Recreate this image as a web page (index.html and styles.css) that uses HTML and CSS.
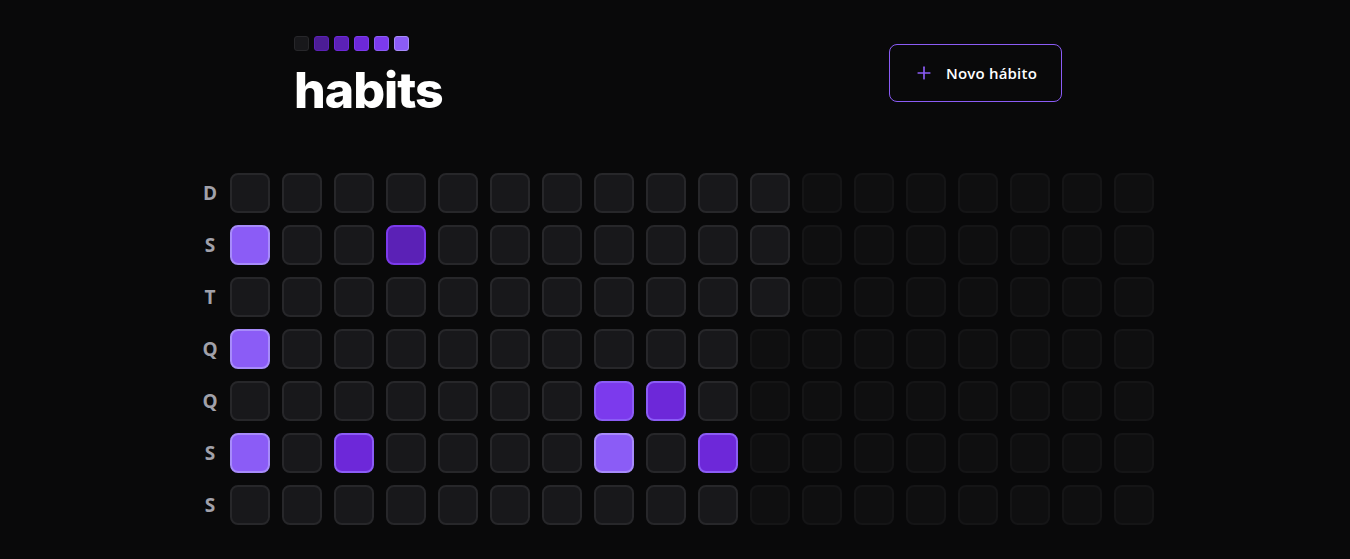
FILE: index.html
```html
<!DOCTYPE html>
<html lang="pt-BR">
<head>
<meta charset="utf-8">
<title>habits</title>
<link rel="stylesheet" href="styles.css">
</head>
<body>
<main class="page">
  <header class="header">
    <div class="logo">
      <div class="logo-squares">
        <span class="sq sq0"></span><span class="sq sq1"></span><span class="sq sq2"></span><span class="sq sq3"></span><span class="sq sq4"></span><span class="sq sq5"></span>
      </div>
      <div class="logo-text">habits</div>
    </div>
    <button class="new-btn" type="button">
      <svg class="plus" width="20" height="20" viewBox="0 0 24 24" fill="none" stroke="currentColor" stroke-width="2" stroke-linecap="round" stroke-linejoin="round"><path d="M5 12h14"/><path d="M12 5v14"/></svg>
      <span>Novo hábito</span>
    </button>
  </header>

  <section class="summary">
    <div class="weekdays">
      <div class="wd">D</div><div class="wd">S</div><div class="wd">T</div><div class="wd">Q</div><div class="wd">Q</div><div class="wd">S</div><div class="wd">S</div>
    </div>
    <div class="days">
      <!-- col 0 -->
      <div class="day"></div><div class="day v5"></div><div class="day"></div><div class="day v5"></div><div class="day"></div><div class="day v5"></div><div class="day"></div>
      <!-- col 1 -->
      <div class="day"></div><div class="day"></div><div class="day"></div><div class="day"></div><div class="day"></div><div class="day"></div><div class="day"></div>
      <!-- col 2 -->
      <div class="day"></div><div class="day"></div><div class="day"></div><div class="day"></div><div class="day"></div><div class="day v7"></div><div class="day"></div>
      <!-- col 3 -->
      <div class="day"></div><div class="day v8"></div><div class="day"></div><div class="day"></div><div class="day"></div><div class="day"></div><div class="day"></div>
      <!-- col 4 -->
      <div class="day"></div><div class="day"></div><div class="day"></div><div class="day"></div><div class="day"></div><div class="day"></div><div class="day"></div>
      <!-- col 5 -->
      <div class="day"></div><div class="day"></div><div class="day"></div><div class="day"></div><div class="day"></div><div class="day"></div><div class="day"></div>
      <!-- col 6 -->
      <div class="day"></div><div class="day"></div><div class="day"></div><div class="day"></div><div class="day"></div><div class="day"></div><div class="day"></div>
      <!-- col 7 -->
      <div class="day"></div><div class="day"></div><div class="day"></div><div class="day"></div><div class="day v6"></div><div class="day v5"></div><div class="day"></div>
      <!-- col 8 -->
      <div class="day"></div><div class="day"></div><div class="day"></div><div class="day"></div><div class="day v7"></div><div class="day"></div><div class="day"></div>
      <!-- col 9 -->
      <div class="day"></div><div class="day"></div><div class="day"></div><div class="day"></div><div class="day"></div><div class="day v7"></div><div class="day"></div>
      <!-- col 10 -->
      <div class="day"></div><div class="day"></div><div class="day"></div><div class="day future"></div><div class="day future"></div><div class="day future"></div><div class="day future"></div>
      <!-- col 11 -->
      <div class="day future"></div><div class="day future"></div><div class="day future"></div><div class="day future"></div><div class="day future"></div><div class="day future"></div><div class="day future"></div>
      <!-- col 12 -->
      <div class="day future"></div><div class="day future"></div><div class="day future"></div><div class="day future"></div><div class="day future"></div><div class="day future"></div><div class="day future"></div>
      <!-- col 13 -->
      <div class="day future"></div><div class="day future"></div><div class="day future"></div><div class="day future"></div><div class="day future"></div><div class="day future"></div><div class="day future"></div>
      <!-- col 14 -->
      <div class="day future"></div><div class="day future"></div><div class="day future"></div><div class="day future"></div><div class="day future"></div><div class="day future"></div><div class="day future"></div>
      <!-- col 15 -->
      <div class="day future"></div><div class="day future"></div><div class="day future"></div><div class="day future"></div><div class="day future"></div><div class="day future"></div><div class="day future"></div>
      <!-- col 16 -->
      <div class="day future"></div><div class="day future"></div><div class="day future"></div><div class="day future"></div><div class="day future"></div><div class="day future"></div><div class="day future"></div>
      <!-- col 17 -->
      <div class="day future"></div><div class="day future"></div><div class="day future"></div><div class="day future"></div><div class="day future"></div><div class="day future"></div><div class="day future"></div>
    </div>
  </section>
</main>
</body>
</html>
```

FILE: styles.css
```css
* { box-sizing: border-box; }

html, body {
  margin: 0;
  height: 100%;
  background: #09090a;
  color: #fff;
  font-family: Inter, "Liberation Sans", sans-serif;
  overflow: hidden;
}

.page {
  padding-top: 36px;
  padding-left: 190px;
  display: flex;
  flex-direction: column;
  align-items: flex-start;
  gap: 58px;
}

.header {
  width: 768px;
  margin-left: 104px;
  display: flex;
  align-items: flex-start;
  justify-content: space-between;
}

.logo {
  display: flex;
  flex-direction: column;
  gap: 14px;
}

.logo-squares {
  display: flex;
  gap: 5px;
}

.sq {
  width: 15px;
  height: 15px;
  border-radius: 3px;
  border: 1px solid;
}
.sq0 { background: #18181b; border-color: #27272a; }
.sq1 { background: #4c1d95; border-color: #5b21b6; }
.sq2 { background: #5b21b6; border-color: #6d28d9; }
.sq3 { background: #6d28d9; border-color: #7c3aed; }
.sq4 { background: #7c3aed; border-color: #8b5cf6; }
.sq5 { background: #8b5cf6; border-color: #a78bfa; }

.logo-text {
  font-family: Inter, sans-serif;
  font-weight: 800;
  font-size: 50px;
  line-height: 50px;
  letter-spacing: -1px;
  color: #fff;
}

.new-btn {
  margin-top: 8px;
  height: 58px;
  display: flex;
  align-items: center;
  gap: 12px;
  padding: 0 24px;
  background: transparent;
  border: 1px solid #8b5cf6;
  border-radius: 8px;
  color: #fff;
  font-family: "Open Sans", Inter, sans-serif;
  font-weight: 600;
  font-size: 15px;
  line-height: 24px;
  letter-spacing: 0.2px;
  cursor: pointer;
}

.plus { color: #8b5cf6; display: block; }

.summary {
  display: flex;
}

.weekdays {
  display: grid;
  grid-template-rows: repeat(7, 40px);
  gap: 12px;
}

.wd {
  width: 40px;
  height: 40px;
  display: flex;
  align-items: center;
  justify-content: center;
  color: #a1a1aa;
  font-family: "Open Sans", Inter, sans-serif;
  font-weight: 700;
  font-size: 19px;
}

.days {
  display: grid;
  grid-template-rows: repeat(7, 40px);
  grid-auto-flow: column;
  grid-auto-columns: 40px;
  gap: 12px;
}

.day {
  width: 40px;
  height: 40px;
  border-radius: 8px;
  border: 2px solid #27272a;
  background: #18181b;
}
.day.future { opacity: 0.4; }
.day.v5 { background: #8b5cf6; border-color: #a78bfa; }
.day.v6 { background: #7c3aed; border-color: #8b5cf6; }
.day.v7 { background: #6d28d9; border-color: #8b5cf6; }
.day.v8 { background: #5b21b6; border-color: #7c3aed; }
```
